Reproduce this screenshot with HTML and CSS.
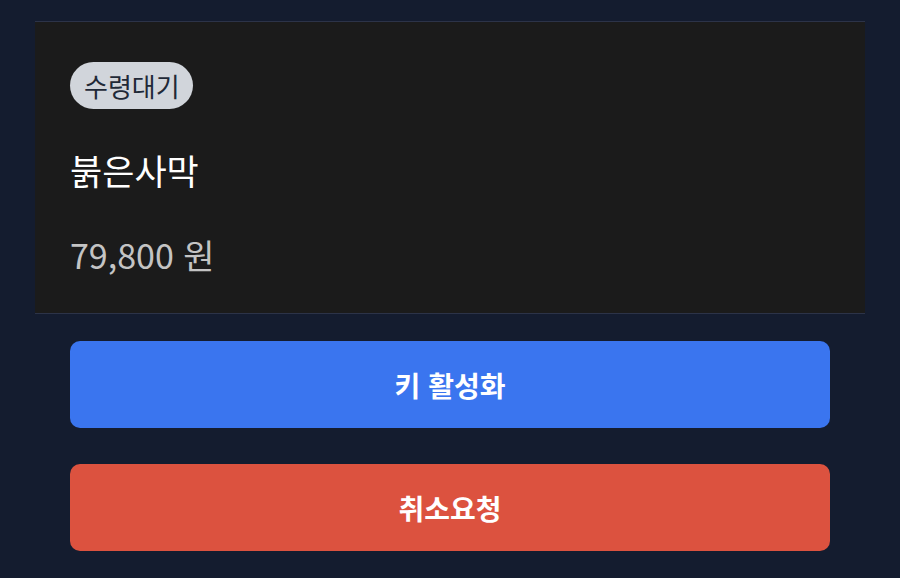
FILE: index.html
```html
<!DOCTYPE html>
<html lang="ko">
<head>
<meta charset="UTF-8">
<meta name="viewport" content="width=device-width, initial-scale=1.0">
<title>주문 상세</title>
<link rel="stylesheet" href="styles.css">
</head>
<body>
<div class="page">
  <div class="order-card">
    <span class="badge">수령대기</span>
    <h2 class="title">붉은사막</h2>
    <p class="price">79,800 원</p>
  </div>
  <div class="actions">
    <button class="btn btn-blue">키 활성화</button>
    <button class="btn btn-red">취소요청</button>
  </div>
</div>
</body>
</html>
```

FILE: styles.css
```css
body {
  margin: 0;
  padding: 0;
  background-color: #141c2f;
  font-family: "Noto Sans CJK KR", "Noto Sans", sans-serif;
}
.page {
  padding: 21px 35px 0;
}
.order-card {
  background-color: #1b1b1b;
  border-top: 1px solid #2c3348;
  border-bottom: 1px solid #2c3348;
  padding: 40px 35px 34px;
  display: flex;
  flex-direction: column;
  align-items: flex-start;
}
.badge {
  background-color: #d1d5db;
  color: #1f2937;
  font-size: 26px;
  line-height: 27px;
  padding: 10px 13px 10px 14px;
  border-radius: 24px;
}
.title {
  margin: 37px 0 0;
  font-size: 35px;
  font-weight: 400;
  line-height: 48px;
  color: #ffffff;
}
.price {
  margin: 37px 0 0;
  font-size: 34px;
  line-height: 48px;
  color: #c4c4c4;
}
.actions {
  display: flex;
  flex-direction: column;
  gap: 36px;
  padding: 27px 35px;
}
.btn {
  height: 87px;
  border: none;
  border-radius: 10px;
  color: #ffffff;
  font-family: inherit;
  font-size: 28px;
  font-weight: 600;
  cursor: pointer;
}
.btn-blue {
  background-color: #3a75ef;
}
.btn-red {
  background-color: #dc523f;
}
```
